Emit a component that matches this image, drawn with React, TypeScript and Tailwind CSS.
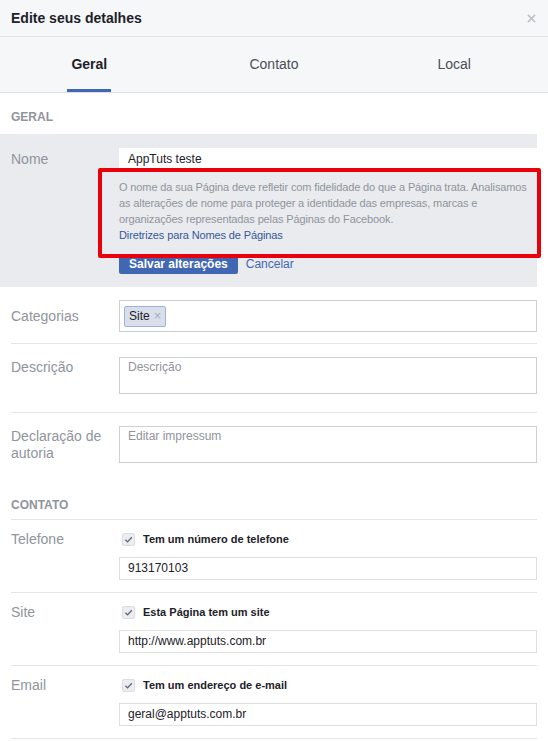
import React from "react";

const LABEL = "w-[108px] shrink-0 text-[14px] text-[#90949c]";
const INPUT = "h-[23px] w-full border border-[#dddfe2] bg-white px-[8px] text-[12px] leading-[21px] text-[#1d2129]";

const CONTACTS = [
    { label: "Telefone", check: "Tem um número de telefone", value: "913170103" },
    { label: "Site", check: "Esta Página tem um site", value: "http://www.apptuts.com.br" },
    { label: "Email", check: "Tem um endereço de e-mail", value: "geral@apptuts.com.br" },
];

function Check() {
    return (
        <span className="flex h-[13px] w-[13px] shrink-0 items-center justify-center rounded-[2px] border border-[#dadde1] bg-[#ebedf0]">
            <svg viewBox="0 0 12 12" className="h-[11px] w-[11px]">
                <path d="M2.6 6.3 L5 8.6 L9.6 3.6" fill="none" stroke="#606770" strokeWidth="1.5" />
            </svg>
        </span>
    );
}

export default function App() {
    return (
        <div className="w-[548px] min-h-[741px] bg-white font-['Liberation_Sans',Arial,sans-serif]">
            {/* header */}
            <div className="flex h-[37px] items-center justify-between border-b border-[#e5e5e5] bg-[#f6f7f9] pl-[11px] pr-[12px]">
                <h1 className="text-[14px] font-bold text-[#1d2129]">Edite seus detalhes</h1>
                <svg viewBox="0 0 10 10" className="h-[9px] w-[9px]">
                    <path d="M1 1 L9 9 M9 1 L1 9" stroke="#bec3c9" strokeWidth="1.8" />
                </svg>
            </div>

            {/* tabs */}
            <div className="grid h-[56px] grid-cols-3 border-b border-[#dddfe2] bg-[#f6f7f9]">
                <div className="flex justify-center">
                    <div className="-ml-[4px] flex h-full flex-col items-center justify-center border-b-[3px] border-[#4267b2] px-[4px] pt-[3px] text-[14px] font-bold text-[#1d2129]">Geral</div>
                </div>
                <div className="flex items-center justify-center text-[14px] text-[#4b4f56]">Contato</div>
                <div className="flex items-center justify-center pr-[5px] text-[14px] text-[#4b4f56]">Local</div>
            </div>

            {/* geral */}
            <div className="flex h-[41px] items-center pl-[11px] pt-[6px] text-[12px] font-bold text-[#90949c]">GERAL</div>

            <div className="mr-[11px] flex bg-[#e9ebee] pb-[13px] pl-[11px] pt-[14px]">
                <div className={`${LABEL} pt-[1px] leading-[20px]`}>Nome</div>
                <div className="flex-1">
                    <div className="h-[22px] w-full bg-white px-[9px] text-[12px] leading-[22px] text-[#1d2129]">AppTuts teste</div>
                    <div className="relative mt-[9px] whitespace-nowrap text-[11px] leading-[16px] tracking-[-0.12px] text-[#90949c]">
                        O nome da sua Página deve refletir com fidelidade do que a Página trata. Analisamos<br />
                        as alterações de nome para proteger a identidade das empresas, marcas e<br />
                        organizações representadas pelas Páginas do Facebook.
                        <div className="text-[#365899]">Diretrizes para Nomes de Páginas</div>
                        <div className="pointer-events-none absolute -bottom-[15px] -left-[21px] -right-[4px] -top-[11px] rounded-[2px] border-[4px] border-[#e8000b]" />
                    </div>
                    <div className="mt-[11px] flex items-center gap-[8px]">
                        <button className="h-[20px] rounded-[2px] bg-[#4267b2] px-[10px] text-[12px] font-bold text-white">Salvar alterações</button>
                        <span className="text-[12px] text-[#4267b2]">Cancelar</span>
                    </div>
                </div>
            </div>

            <div className="mx-[11px]">
                <div className="flex border-b border-[#e5e5e5] pb-[11px] pt-[13px]">
                    <div className={`${LABEL} pt-[6px] leading-[20px]`}>Categorias</div>
                    <div className="flex h-[32px] flex-1 items-center border border-[#ccd0d5] bg-white px-[4px]">
                        <span className="flex h-[21px] items-center gap-[4px] rounded-[2px] border border-[#9cb4d8] bg-[#d8dfea] px-[4px] text-[12px] text-[#1d2129]">
                            Site <span className="text-[13px] text-[#a5adba]">×</span>
                        </span>
                    </div>
                </div>

                <div className="flex border-b border-[#e5e5e5] pb-[18px] pt-[13px]">
                    <div className={`${LABEL} leading-[20px]`}>Descrição</div>
                    <div className="h-[37px] flex-1 border border-[#ccd0d5] bg-white px-[8px] pt-[1px] text-[12px] leading-[16px] text-[#90949c]">Descrição</div>
                </div>

                <div className="flex pt-[13px]">
                    <div className={`${LABEL} pr-[10px] pt-[2px] leading-[17px]`}>Declaração de autoria</div>
                    <div className="h-[37px] flex-1 border border-[#ccd0d5] bg-white px-[8px] pt-[1px] text-[12px] leading-[16px] text-[#90949c]">Editar impressum</div>
                </div>

                <div className="flex h-[57px] items-end border-b border-[#e5e5e5] pb-[5px] text-[12px] font-bold text-[#90949c]">CONTATO</div>

                {CONTACTS.map(c => (
                    <div key={c.label} className="flex border-b border-[#e5e5e5] pb-[12px] pt-[9px]">
                        <div className={`${LABEL} leading-[20px]`}>{c.label}</div>
                        <div className="flex-1">
                            <div className="flex h-[20px] items-center gap-[8px] pl-[3px] text-[11px] font-bold text-[#1d2129]">
                                <Check />
                                <span>{c.check}</span>
                            </div>
                            <div className={`mt-[8px] ${INPUT}`}>{c.value}</div>
                        </div>
                    </div>
                ))}
            </div>
        </div>
    );
}
